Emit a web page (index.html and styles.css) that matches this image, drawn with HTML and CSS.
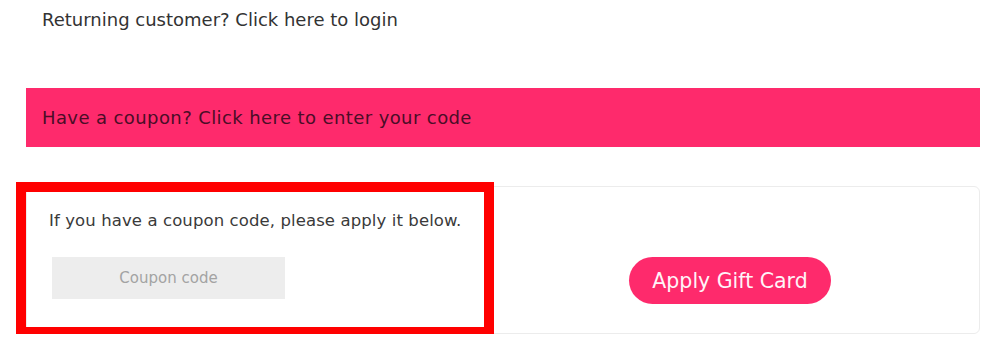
FILE: index.html
```html
<!DOCTYPE html>
<html lang="en">
<head>
<meta charset="utf-8">
<title>Checkout</title>
<link rel="stylesheet" href="styles.css">
</head>
<body>
<div class="page">
  <div class="notice returning">Returning customer? <a href="#" class="link">Click here to login</a></div>
  <div class="notice coupon-bar">Have a coupon? <a href="#" class="link">Click here to enter your code</a></div>
  <div class="card">
    <div class="card-text">If you have a coupon code, please apply it below.</div>
    <div class="card-empty"></div>
    <div class="card-input-wrap"><input class="coupon-input" type="text" placeholder="Coupon code"></div>
    <div class="card-btn-wrap"><button class="gift-btn" type="button">Apply Gift Card</button></div>
    <div class="highlight"></div>
  </div>
</div>
</body>
</html>
```

FILE: styles.css
```css
html, body {
  margin: 0;
  padding: 0;
  background: #ffffff;
}
.page {
  width: 954px;
  margin-left: 26px;
  font-family: "DejaVu Sans", sans-serif;
}
.notice {
  padding-left: 16px;
}
.link {
  color: inherit;
  text-decoration: none;
}
.returning {
  padding-top: 8px;
  height: 88px;
  box-sizing: border-box;
  font-size: 18px;
  line-height: 24px;
  color: #333333;
}
.coupon-bar {
  height: 59px;
  background: #fe2a6c;
  color: #4b0d27;
  font-size: 18px;
  letter-spacing: 0.4px;
  line-height: 59px;
}
.card {
  position: relative;
  margin-top: 39px;
  border: 1px solid #ececec;
  border-radius: 6px;
  padding: 21px 22px 29px;
  display: grid;
  grid-template-columns: 1fr 1fr;
  grid-template-rows: auto auto;
  row-gap: 23px;
  align-items: start;
}
.card-text {
  font-size: 16.5px;
  letter-spacing: 0.1px;
  line-height: 26px;
  color: #3a3a3a;
}
.card-input-wrap {
  padding-left: 3px;
}
.coupon-input {
  display: block;
  width: 233px;
  height: 42px;
  box-sizing: border-box;
  border: none;
  background: #ededed;
  text-align: center;
  font-family: "DejaVu Sans", sans-serif;
  font-size: 15px;
  color: #333;
  outline: none;
}
.coupon-input::placeholder {
  color: #a3a3a3;
}
.card-btn-wrap {
  display: flex;
  justify-content: center;
}
.gift-btn {
  width: 202px;
  height: 47px;
  border: none;
  border-radius: 24px;
  background: #fe2a6c;
  color: #fff3f8;
  font-family: "DejaVu Sans", sans-serif;
  font-size: 20.5px;
  padding: 0;
  cursor: pointer;
}
.highlight {
  position: absolute;
  left: -11px;
  top: -5px;
  width: 478px;
  height: 155px;
  box-sizing: border-box;
  border: 10px solid #ff0000;
  pointer-events: none;
}
```
